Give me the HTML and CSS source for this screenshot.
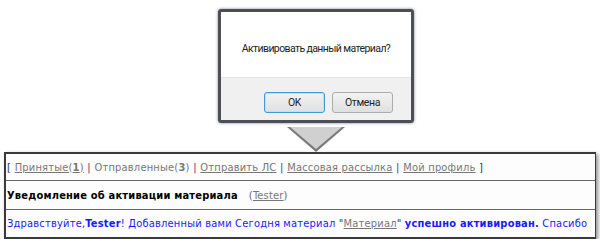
FILE: index.html
```html
<!DOCTYPE html>
<html>
<head>
    <title>Активация материала</title>
    <meta charset="utf-8" />
    <link rel="stylesheet" href="styles.css">
</head>
<body>
    <div class="confirm">
        <div class="confirm-box">
            <div class="confirm-message">Активировать данный материал?</div>
            <div class="confirm-actions">
                <button class="btn btn-ok">OK</button>
                <button class="btn">Отмена</button>
            </div>
        </div>
        <div class="confirm-arrow"></div>
    </div>
    <div class="mail-panel">
        <div class="mail-row mail-nav">
            <span class="bracket">[</span>
            <a href="#">Принятые(<b>1</b>)</a>
            <span class="sep">|</span>
            <span class="current">Отправленные(<b>3</b>)</span>
            <span class="sep">|</span>
            <a href="#">Отправить ЛС</a>
            <span class="sep">|</span>
            <a href="#">Массовая рассылка</a>
            <span class="sep">|</span>
            <a href="#">Мой профиль</a>
            <span class="bracket">]</span>
        </div>
        <div class="mail-row mail-title">
            <b>Уведомление об активации материала</b>
            <span class="mail-from">(<a href="#">Tester</a>)</span>
        </div>
        <div class="mail-row mail-body">
            Здравствуйте,<b>Tester</b>! Добавленный вами Сегодня материал "<a href="#">Материал</a>" <b>успешно активирован.</b> Спасибо
        </div>
    </div>
</body>
</html>
```

FILE: styles.css
```css
body{
    margin:0;
    background:#fff;
}
.confirm{
    width:196px;
    margin:9px 0 0 218px;
    display:flex;
    flex-direction:column;
    align-items:center;
}
.confirm-box{
    width:100%;
    box-sizing:border-box;
    border:3px solid #4c4f54;
    border-radius:3px;
    box-shadow:0 0 3px rgba(0,0,0,0.5);
    font-family:Roboto, "Liberation Sans", sans-serif;
    font-size:11px;
    color:#1e1e1e;
}
.confirm-message{
    height:65px;
    background:#fff;
    display:flex;
    align-items:center;
    justify-content:center;
    padding-top:8px;
    box-sizing:border-box;
    font-size:10.5px;
    letter-spacing:-0.6px;
}
.confirm-actions{
    background:#f0f0f0;
    border-top:1px solid #e4e4e4;
    height:43px;
    box-sizing:border-box;
    padding:14px 18px 0 0;
    display:flex;
    justify-content:flex-end;
    gap:7px;
}
.btn{
    width:61px;
    height:21px;
    padding:0;
    font-family:Roboto, "Liberation Sans", sans-serif;
    font-size:10.5px;
    letter-spacing:-0.4px;
    color:#1e1e1e;
    border:1px solid #acacac;
    border-radius:3px;
    background:linear-gradient(#f2f2f2, #e0e0e0);
}
.btn-ok{
    border-color:#3c9ad6;
    box-shadow:inset 0 0 0 1px #bfe1f6;
}
.confirm-arrow{
    width:0;
    height:0;
    margin-top:4px;
    border-left:29px solid transparent;
    border-right:29px solid transparent;
    border-top:25px solid #7a7a7a;
    position:relative;
}
.confirm-arrow:after{
    content:"";
    position:absolute;
    left:-26px;
    top:-25px;
    border-left:26px solid transparent;
    border-right:26px solid transparent;
    border-top:22px solid #d0d0d0;
}
.mail-panel{
    width:592px;
    margin-left:4px;
    box-sizing:border-box;
    border:2px solid #3a3a3a;
    border-right-width:1px;
    box-shadow:2px 2px 4px rgba(0,0,0,0.45);
    background:#fdfdfd;
    font-family:"DejaVu Sans Condensed", "DejaVu Sans", Verdana, sans-serif;
    font-stretch:condensed;
    font-size:11px;
    letter-spacing:0.2px;
}
.mail-row{
    height:28px;
    display:flex;
    align-items:center;
    white-space:nowrap;
    padding-left:1px;
    border-bottom:1px solid #666;
}
.mail-row:last-child{
    border-bottom:none;
    height:27px;
}
.mail-nav{
    height:26px;
    color:#777;
    gap:3.6px;
}
.mail-nav a{
    color:#777;
}
.mail-nav .bracket{
    color:#2f2f6f;
}
.mail-nav .sep{
    color:#4b3b7b;
}
.mail-title b{
    color:#000;
}
.mail-from{
    margin-left:11px;
    color:#666;
}
.mail-from a{
    color:#777;
}
.mail-body{
    color:#1a1aff;
    display:block;
    line-height:27px;
}
.mail-body a{
    color:#777;
}
```
